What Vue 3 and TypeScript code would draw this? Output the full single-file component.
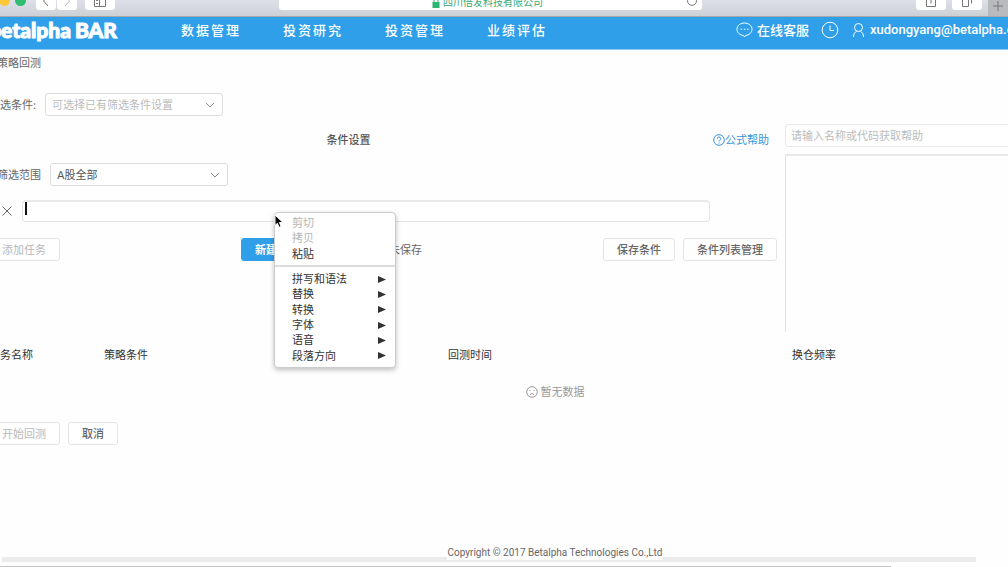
<script setup lang="ts">
import { ref } from 'vue'

interface MenuItem {
  label: string
  disabled?: boolean
}

const navItems: string[] = ['数据管理', '投资研究', '投资管理', '业绩评估']
const editItems: MenuItem[] = [
  { label: '剪切', disabled: true },
  { label: '拷贝', disabled: true },
  { label: '粘贴' },
]
const subMenus: string[] = ['拼写和语法', '替换', '转换', '字体', '语音', '段落方向']
const columns: string[] = ['任务名称', '策略条件', '回测时间', '换仓频率']

const preset = ref('')
const range = ref('all')
const formula = ref('')
const keyword = ref('')
</script>

<template>
  <div class="window">
    <div class="chrome">
      <span class="dot red"></span>
      <span class="dot yellow"></span>
      <span class="dot green"></span>
      <button class="tool back" aria-label="后退">
        <svg width="10" height="14" viewBox="0 0 10 14"><path d="M7 2 2.500 7 7 12" /></svg>
      </button>
      <button class="tool forward" aria-label="前进">
        <svg width="10" height="14" viewBox="0 0 10 14"><path d="M3 2 7.500 7 3 12" /></svg>
      </button>
      <button class="tool side" aria-label="边栏">
        <svg width="14" height="14" viewBox="0 0 14 14"><path d="M1.500 1.500h11v12h-11zM6.500 1.500v12M3 4.500h2M3 7.500h2M3 10.500h2" /></svg>
      </button>
      <div class="address">
        <span class="site">
          <svg class="lock" width="8" height="11" viewBox="0 0 8 11"><path d="M2 5V3a2 2 0 0 1 4 0v2" /><rect x="0.500" y="5" width="7" height="6" /></svg>
          四川倍发科技有限公司
        </span>
        <button class="reload" aria-label="重新载入">
          <svg width="12" height="12" viewBox="0 0 12 12"><path d="M9 2.500A4.500 4.500 0 1 1 3 2.500M3 0v3h3" /></svg>
        </button>
      </div>
      <button class="tool share" aria-label="共享">
        <svg width="12" height="16" viewBox="0 0 12 16"><path d="M4 6.500H1.500v9h9v-9H8M6 12.500V2" /></svg>
      </button>
      <button class="tool tabs" aria-label="标签页">
        <svg width="12" height="16" viewBox="0 0 12 16"><path d="M1.500 6.500h6v9h-6zM4 4.500h6.500v8" /></svg>
      </button>
      <button class="plus" aria-label="新标签页">
        <svg width="12" height="12" viewBox="0 0 12 12"><path d="M6 1v10M1 6h10" /></svg>
      </button>
    </div>

    <header class="topbar">
      <a class="logo" href="#"><span class="brand">betalpha</span><span class="bar">BAR</span></a>
      <nav class="nav">
        <a v-for="item in navItems" :key="item" href="#">{{ item }}</a>
      </nav>
      <div class="account">
        <a class="service" href="#">
          <svg width="17" height="16" viewBox="0 0 17 16">
            <path d="M8.500 1C4.300 1 1 3.700 1 7.200s3 5.900 6.300 6.200L8.500 15l1.200-1.600C13 13.100 16 10.700 16 7.200S12.700 1 8.500 1z" />
            <path d="M4.500 7.200H6M7.800 7.200h1.500M11 7.200h1.500" />
          </svg>
          在线客服
        </a>
        <a class="history" href="#" aria-label="历史">
          <svg width="18" height="18" viewBox="0 0 18 18"><circle cx="9" cy="9" r="7.800" /><path d="M9 4.500V9.500h4" /></svg>
        </a>
        <a class="user" href="#">
          <svg width="13" height="16" viewBox="0 0 13 16"><circle cx="6.500" cy="5.500" r="4" /><path d="M1.500 15c0-3 1.300-4.800 3.200-5.800M11.500 15c0-3-1.300-4.800-3.200-5.800" /></svg>
          xudongyang@betalpha.com
        </a>
      </div>
    </header>

    <main class="page">
      <h1 class="title">策略回测</h1>

      <div class="preset">
        <label for="preset">筛选条件:</label>
        <span class="select">
          <select id="preset" v-model="preset" class="empty">
            <option value="">可选择已有筛选条件设置</option>
          </select>
          <svg width="10" height="6" viewBox="0 0 10 6"><path d="M1 1l4 4 4-4" /></svg>
        </span>
      </div>

      <div class="workspace">
        <section class="editor">
          <div class="heading">
            <h2>条件设置</h2>
            <a class="help" href="#">
              <svg width="12" height="12" viewBox="0 0 12 12"><circle cx="6" cy="6" r="5.300" /><path d="M4.200 4.800a1.800 1.800 0 1 1 2.500 1.600Q6 6.700 6 7.500M6 8.600v1" /></svg>公式帮助
            </a>
          </div>
          <div class="range">
            <label for="range">筛选范围</label>
            <span class="select">
              <select id="range" v-model="range">
                <option value="all">A股全部</option>
              </select>
              <svg width="10" height="6" viewBox="0 0 10 6"><path d="M1 1l4 4 4-4" /></svg>
            </span>
          </div>
          <div class="formula">
            <button class="remove" aria-label="删除条件">
              <svg width="12" height="12" viewBox="0 0 12 12"><path d="M1.500 1.500l9 9M10.500 1.500l-9 9" /></svg>
            </button>
            <div class="field">
              <input v-model="formula" type="text" aria-label="条件公式" />
              <span class="caret"></span>
            </div>
          </div>
          <div class="actions">
            <button class="btn" disabled>添加任务</button>
            <button class="btn primary">新建</button>
            <span class="status">未保存</span>
            <button class="btn save">保存条件</button>
            <button class="btn">条件列表管理</button>
          </div>
        </section>
        <aside class="reference">
          <input v-model="keyword" type="text" placeholder="请输入名称或代码获取帮助" aria-label="公式搜索" />
          <div class="result"></div>
        </aside>
      </div>

      <table class="tasks">
        <thead>
          <tr><th v-for="column in columns" :key="column" scope="col">{{ column }}</th></tr>
        </thead>
        <tbody>
          <tr>
            <td :colspan="columns.length">
              <span class="nodata">
                <svg width="12" height="12" viewBox="0 0 12 12"><circle cx="6" cy="6" r="5.300" /><path d="M3.500 4.500h1M7.500 4.500h1M3.800 8.800Q6 5.900 8.200 8.800" /></svg>
                暂无数据
              </span>
            </td>
          </tr>
        </tbody>
      </table>

      <div class="submit">
        <button class="btn" disabled>开始回测</button>
        <button class="btn">取消</button>
      </div>
    </main>

    <footer class="footer">
      <span class="shade"></span>
      <p>Copyright © 2017 Betalpha Technologies Co.,Ltd</p>
      <span class="scroll"></span>
    </footer>

    <div class="context" role="menu">
      <div class="group edit">
        <button v-for="item in editItems" :key="item.label" role="menuitem" :disabled="item.disabled">{{ item.label }}</button>
      </div>
      <div class="group more">
        <button v-for="label in subMenus" :key="label" role="menuitem">
          {{ label }}
          <svg width="8" height="8" viewBox="0 0 8 8"><path d="M0 0v7L8 3.500z" /></svg>
        </button>
      </div>
    </div>
    <svg class="pointer" width="10" height="15" viewBox="0 0 10 15"><path d="M1 1v10.500l2.400-2.200 1.700 4 2-0.900-1.700-3.900H9z" /></svg>
  </div>
</template>

<style>
body {
  margin: 0;
}
</style>

<style scoped>
.window {
  position: relative;
  display: flex;
  flex-direction: column;
  min-height: 100vh;
  overflow: hidden;
  background: #fefefe;
  color: #666;
  font-family: "Inter", "Noto Sans CJK SC", sans-serif;
  font-size: 11px;
  line-height: 16px;
}
* {
  box-sizing: border-box;
}
button,
input,
select {
  margin: 0;
  font: inherit;
  color: inherit;
}
a {
  color: inherit;
  text-decoration: none;
}
svg {
  flex: none;
  fill: none;
  stroke: currentColor;
}
h1,
h2,
p {
  margin: 0;
  font-size: 11px;
  font-weight: 400;
}

.chrome {
  display: flex;
  align-items: flex-end;
  height: 17px;
  padding-bottom: 6px;
  overflow: hidden;
  background: linear-gradient(#dde0e8, #cdd0d5);
  border-bottom: 1px solid #a7a6a8;
  color: #777;
}
.dot {
  flex: none;
  width: 11px;
  height: 11px;
  margin: 0 5px 4px 0;
  border-radius: 50%;
}
.red {
  margin-left: -17px;
  background: #fc5b57;
}
.yellow {
  background: #fdc93b;
}
.green {
  margin-right: 10px;
  background: #2fbb70;
}
.tool {
  display: flex;
  flex: none;
  align-items: flex-end;
  justify-content: center;
  width: 30px;
  height: 22px;
  padding: 0 0 3px;
  border: 0;
  border-radius: 3px;
  background: #fff;
}
.back,
.forward {
  width: 20px;
  padding-bottom: 2px;
  margin-right: 1px;
}
.forward {
  color: #bbb;
}
.side {
  margin-left: 7px;
}
.address {
  display: flex;
  flex: 1;
  align-items: flex-end;
  height: 22px;
  margin: 0 214px 0 164px;
  padding-right: 4px;
  border-radius: 3px;
  background: #fff;
}
.site {
  display: flex;
  flex: 1;
  align-items: center;
  justify-content: center;
  gap: 3px;
  height: 16px;
  padding-left: 10px;
  color: #35a873;
  font-size: 10px;
}
.lock rect {
  fill: #2bb673;
  stroke: none;
}
.reload {
  display: flex;
  padding: 0 0 3px;
  border: 0;
  background: none;
}
.share {
  margin-right: 6px;
}
.plus {
  display: flex;
  flex: none;
  align-items: center;
  justify-content: center;
  width: 20px;
  height: 20px;
  margin: 0 0 -6px 6px;
  padding: 0;
  border: 0;
  background: #b9babd;
}

.topbar {
  display: flex;
  align-items: center;
  height: 33px;
  padding-bottom: 6px;
  border-bottom: 1px solid #8ecbf5;
  background: #2f9fea;
  color: #fff;
  white-space: nowrap;
}
.logo {
  display: flex;
  flex: none;
  align-items: center;
  justify-content: flex-end;
  gap: 4px;
  width: 117px;
  font-family: "Lato", sans-serif;
  font-size: 21px;
  font-weight: 900;
  -webkit-text-stroke: 1px #fff;
}
.nav {
  display: flex;
  flex: 1;
  margin-left: 64px;
  font-size: 13px;
  font-weight: 500;
  letter-spacing: 2px;
}
.nav a {
  width: 102px;
}
.account {
  display: flex;
  flex: none;
  align-items: center;
  width: 272px;
  font-size: 13px;
}
.account a {
  display: flex;
  align-items: center;
}
.service {
  gap: 4px;
  font-weight: 500;
}
.history {
  margin: 0 13px 0 12px;
}
.account .user {
  gap: 5px;
  font-family: "Roboto", sans-serif;
  font-weight: 500;
}

.page {
  margin: 0 -128px 0 -26px;
  padding: 5px 0 0;
}
.title {
  padding-left: 23px;
}
.preset,
.range,
.formula,
.actions,
.submit {
  display: flex;
  align-items: center;
}
.preset {
  margin-top: 22px;
  padding-left: 15px;
}
.preset label {
  width: 56px;
}
.select {
  display: grid;
  grid-template-columns: 1fr 18px;
  align-items: center;
  width: 178px;
  color: #888;
}
.select select {
  grid-area: 1 / 1 / 2 / 3;
  height: 23px;
  padding: 0 6px;
  border: 1px solid #ddd;
  border-radius: 3px;
  background: #fff;
  color: #555;
  appearance: none;
}
.select .empty {
  color: #bbb;
}
.select svg {
  grid-area: 1 / 2;
}
.workspace {
  display: grid;
  grid-template-columns: 1fr 351px;
  gap: 8px;
  margin-top: 8px;
}
.editor {
  padding-top: 8px;
}
.heading {
  display: grid;
  grid-template-columns: 1fr auto 1fr;
  align-items: center;
  padding: 0 8px 0 0;
}
.heading h2 {
  grid-column: 2;
  padding-right: 46px;
  font-weight: 500;
  color: #555;
}
.help {
  display: flex;
  align-items: center;
  justify-self: end;
  color: #3a96d6;
}
.range {
  margin-top: 15px;
  padding-left: 23px;
}
.range label {
  width: 53px;
}
.formula {
  gap: 9px;
  margin-top: 14px;
  padding: 0 67px 0 27px;
}
.remove {
  display: flex;
  padding: 0;
  border: 0;
  background: none;
}
.field {
  display: grid;
  flex: 1;
}
.field input {
  grid-area: 1 / 1;
  width: 100%;
  height: 22px;
  padding: 0 6px;
  border: 1px solid #e4e4e4;
  border-top: 2px solid #e9e9e9;
  border-radius: 4px;
  background: #fff;
}
.caret {
  grid-area: 1 / 1;
  width: 2px;
  height: 13px;
  margin: 2px 0 0 3px;
  background: #111;
}
.actions {
  margin-top: 16px;
  padding-left: 14px;
}
.btn {
  height: 23px;
  padding: 0 13px;
  border: 1px solid #e4e4e4;
  border-radius: 3px;
  background: #fff;
  color: #666;
  font-weight: 500;
  line-height: 16px;
  white-space: nowrap;
}
.btn:disabled {
  color: #b8b8b8;
  font-weight: 400;
}
.btn.primary {
  margin-left: 181px;
  border-color: #2f9fea;
  background: #2f9fea;
  color: #fff;
  font-weight: 700;
}
.status {
  margin-left: 98px;
}
.save {
  margin: 0 8px 0 auto;
}
.reference {
  display: flex;
  flex-direction: column;
  gap: 7px;
}
.reference input {
  height: 23px;
  padding: 0 5px;
  border: 1px solid #e8e8e8;
  border-radius: 3px;
  background: #fff;
}
.reference input::placeholder {
  color: #bbb;
}
.result {
  height: 178px;
  border-top: 2px solid #e9e9e9;
  border-left: 1px solid #e4e4e4;
}

.tasks {
  width: 100%;
  border-collapse: collapse;
  table-layout: fixed;
}
.tasks th {
  height: 46px;
  padding: 0;
  color: #333;
  font-weight: 400;
  text-align: left;
}
.tasks th:first-child {
  width: 130px;
  padding-left: 15px;
}
.tasks td {
  height: 28px;
  padding: 0;
  color: #999;
}
.nodata {
  display: flex;
  align-items: center;
  justify-content: center;
  gap: 3px;
}
.submit {
  gap: 8px;
  margin-top: 16px;
  padding-left: 14px;
}

.footer {
  display: grid;
  grid-template-rows: 16px 4px 1px;
  margin-top: auto;
}
.shade {
  grid-area: 1 / 1;
  align-self: end;
  height: 5px;
  margin: 0 32px 0 2px;
  background: #ebebeb;
}
.footer p {
  grid-area: 1 / 1;
  justify-self: center;
  height: 14px;
  margin-left: 102px;
  background: #fefefe;
  font-family: "Roboto", sans-serif;
  font-size: 10px;
  line-height: 14px;
}
.scroll {
  grid-area: 3 / 1;
  margin-right: 117px;
  background: #c4c4c4;
}

.context {
  position: absolute;
  top: 212px;
  left: 274px;
  width: 122px;
  padding: 3px 0 3px;
  border: 1px solid #ccc;
  border-radius: 4px;
  background: #fff;
  box-shadow: 0 2px 5px rgba(0, 0, 0, 0.25);
}
.group {
  display: flex;
  flex-direction: column;
}
.group button {
  display: flex;
  flex: 1;
  align-items: center;
  justify-content: space-between;
  padding: 0 9px 0 17px;
  border: 0;
  background: none;
  color: #333;
  line-height: 15px;
}
.group button:disabled {
  color: #b5b5b5;
}
.group svg {
  fill: #333;
  stroke: none;
}
.edit {
  height: 46px;
}
.more {
  height: 99px;
  margin-top: 3px;
  padding-top: 5px;
  border-top: 2px solid #dcdcdc;
}
.pointer {
  position: absolute;
  top: 214px;
  left: 274px;
  fill: #000;
  stroke: #fff;
}
</style>
